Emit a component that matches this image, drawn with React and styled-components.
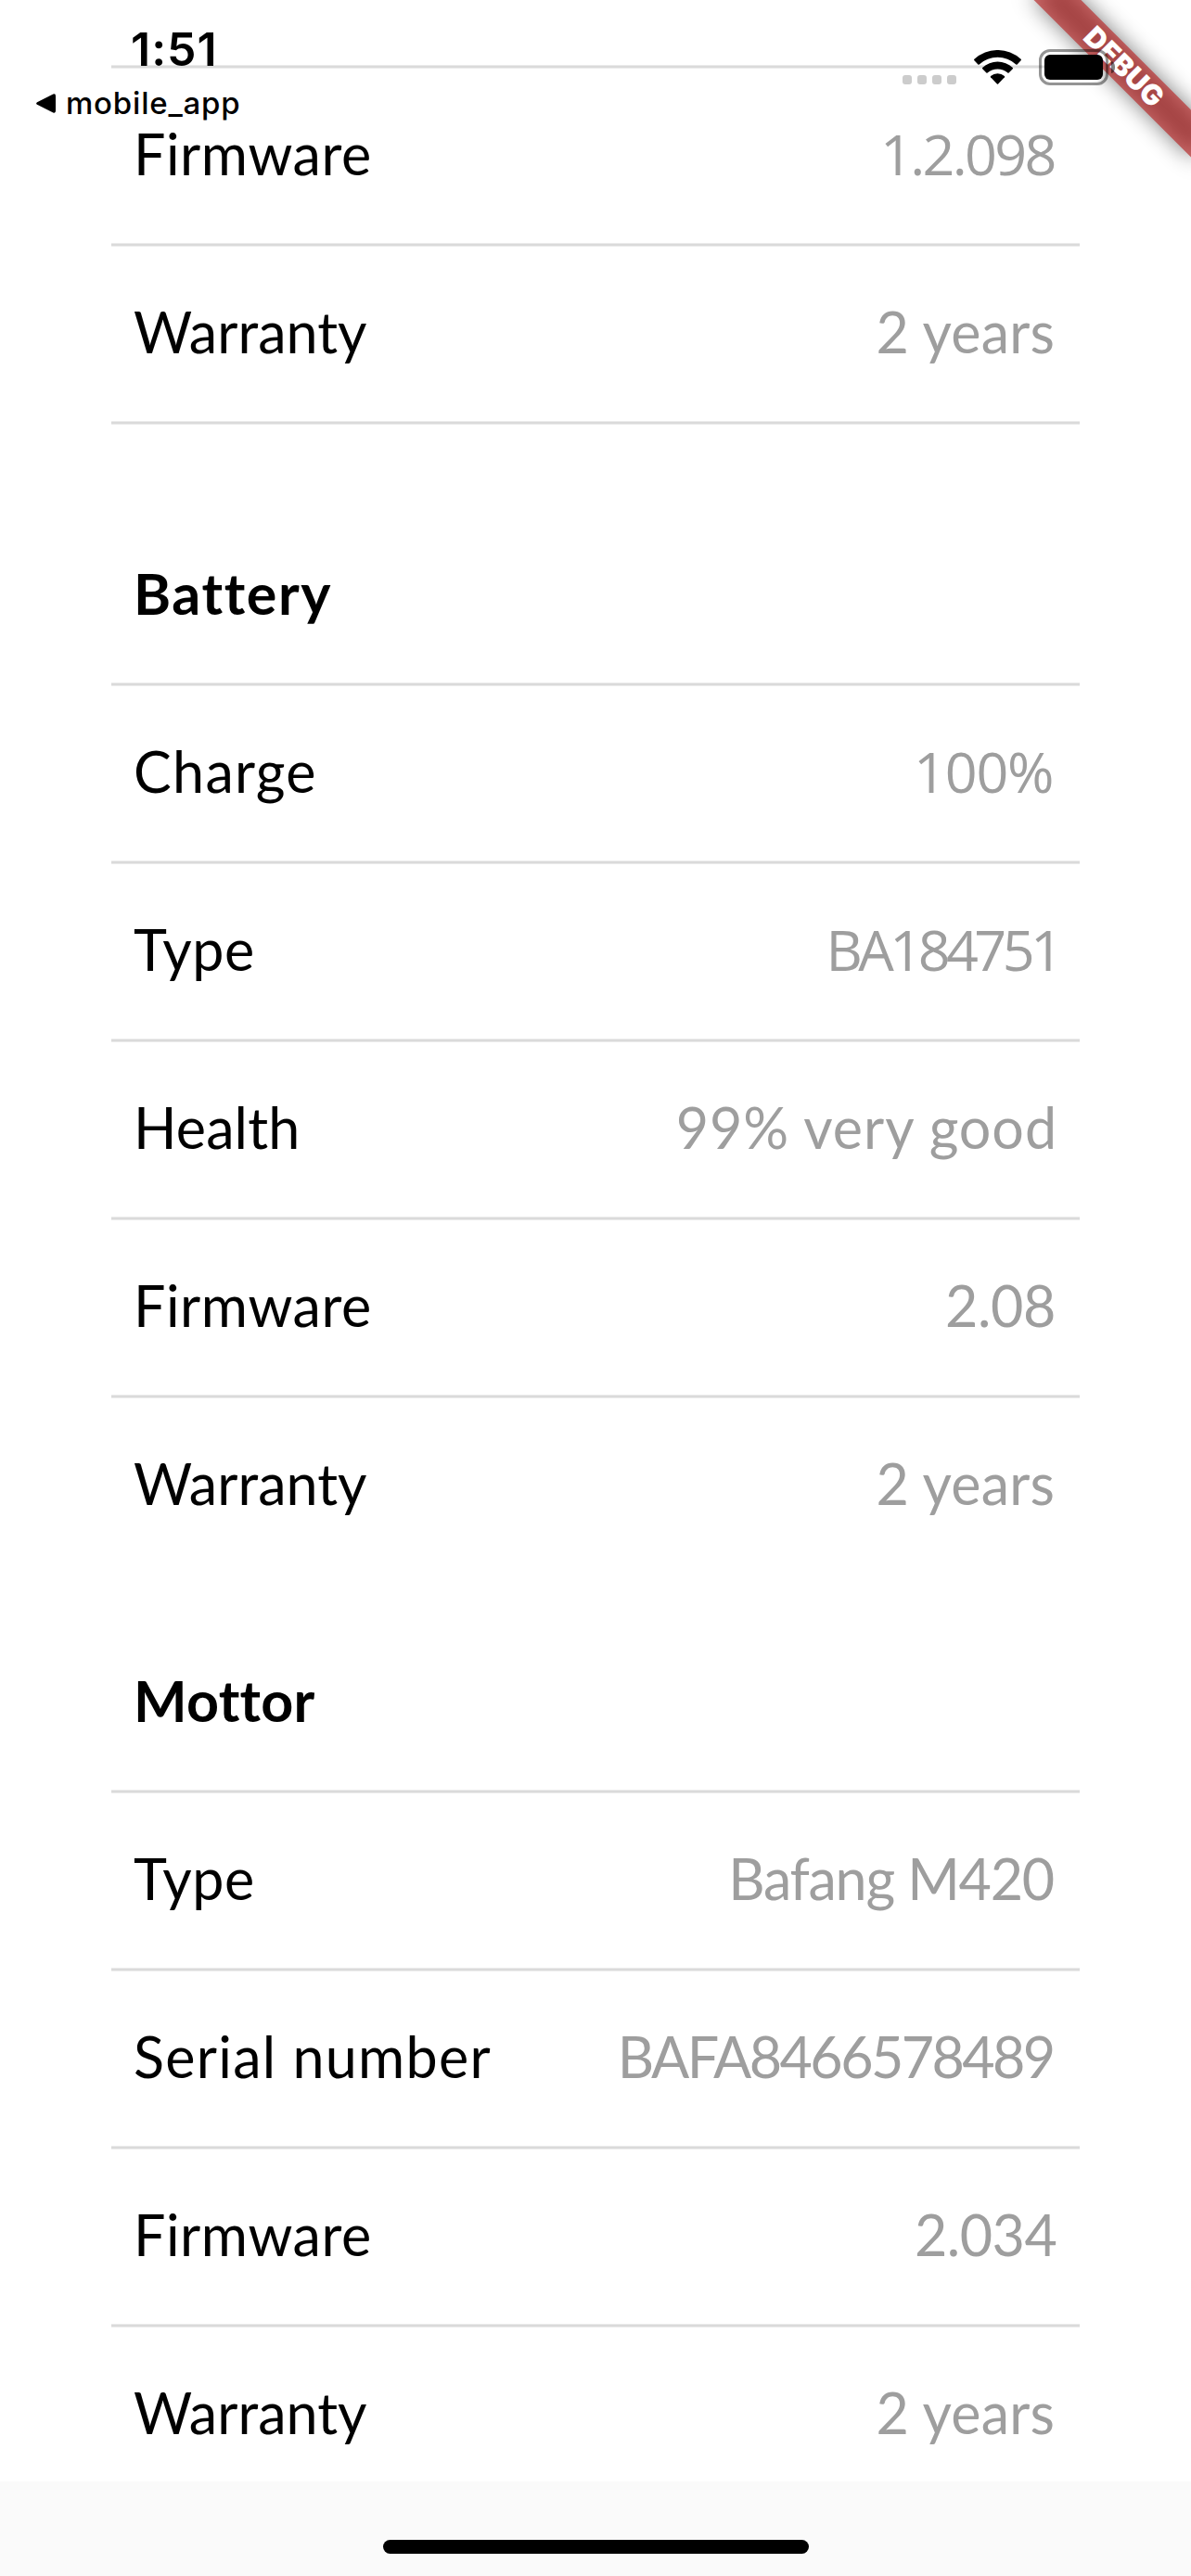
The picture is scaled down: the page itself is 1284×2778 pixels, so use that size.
import React from "react";
import styled, { createGlobalStyle } from "styled-components";

const GlobalStyle = createGlobalStyle`
  *, *::before, *::after { box-sizing: border-box; }
  body { margin: 0; background: #fafafa; }
`;

const Screen = styled.main`
  position: relative;
  display: flex;
  flex-direction: column;
  width: 1284px;
  height: 2778px;
  overflow: hidden;
  background: #fafafa;
  color: #000;
  font-family: Lato, "Open Sans", sans-serif;
`;

const Content = styled.div`
  height: 2676px;
  overflow: hidden;
  padding: 70px 120px 0;
  background: #fff;
`;

const Section = styled.section`
  margin-top: ${(p) => p.$gap || 0}px;
`;

const Row = styled.div`
  display: flex;
  align-items: center;
  justify-content: space-between;
  height: 188px;
  padding: 0 24px 5px;
  font-size: 61px;
  line-height: 72px;
  white-space: nowrap;
`;

const Divider = styled.div`
  height: 4px;
  background: #dadada;
  border: solid #ebebeb;
  border-width: 1px 0;
`;

const Title = styled.h2`
  margin: 0;
  font-size: inherit;
  font-weight: 700;
  letter-spacing: ${(p) => p.$track}px;
`;

const Label = styled.span`
  letter-spacing: ${(p) => p.$track}px;
`;

const Value = styled.span`
  color: #9e9e9e;
  font-family: ${(p) => (p.$plainOne ? '"Open Sans", sans-serif' : "inherit")};
  letter-spacing: ${(p) => p.$track}px;
  margin-right: ${(p) => p.$end}px;
`;

const BottomBar = styled.footer`
  display: flex;
  justify-content: center;
  height: 102px;
  padding-top: 63px;
  background: #fafafa;
`;

const HomeIndicator = styled.div`
  width: 459px;
  height: 15px;
  border-radius: 8px;
  background: #000;
`;

const StatusBar = styled.header`
  position: absolute;
  inset: 0 0 auto 0;
  display: flex;
  justify-content: space-between;
  height: 140px;
  padding: 23px 82px 0 39px;
  font-family: Inter, sans-serif;
`;

const StatusLeft = styled.div`
  display: flex;
  flex-direction: column;
  gap: 8px;
`;

const Time = styled.span`
  margin-left: 102px;
  font-size: 50px;
  line-height: 60px;
  font-weight: 600;
  letter-spacing: 1px;
`;

const BackLink = styled.span`
  display: flex;
  align-items: center;
  gap: 11px;
  font-size: 33px;
  line-height: 40px;
  font-weight: 500;
  letter-spacing: 0.8px;
`;

const StatusRight = styled.div`
  display: flex;
  align-items: flex-start;
  padding-top: 30px;
`;

const Signal = styled.div`
  display: flex;
  gap: 6px;
  margin: 28px 19px 0 0;
`;

const Dot = styled.i`
  width: 10px;
  height: 10px;
  border-radius: 3px;
  background: #cccccc;
`;

const WifiIcon = styled.svg`
  width: 51px;
  height: 37px;
  margin: 1px 19px 0 0;
`;

const Battery = styled.div`
  display: flex;
  align-items: center;
`;

const BatteryShell = styled.div`
  width: 75px;
  height: 39px;
  padding: 3px;
  border: 3px solid rgba(0, 0, 0, 0.42);
  border-radius: 12px;
`;

const BatteryFill = styled.div`
  width: 63px;
  height: 27px;
  border-radius: 6px;
  background: #000;
`;

const BatteryCap = styled.div`
  width: 4px;
  height: 13px;
  margin-left: 3px;
  border-radius: 0 4px 4px 0 / 0 6px 6px 0;
  background: rgba(0, 0, 0, 0.5);
`;

const BannerCorner = styled.div`
  position: absolute;
  top: 0;
  right: 0;
  width: 260px;
  height: 260px;
  overflow: hidden;
`;

const Ribbon = styled.div`
  position: absolute;
  top: 54px;
  right: -48px;
  width: 240px;
  height: 36px;
  transform: rotate(45deg);
`;

const RibbonShadow = styled.div`
  position: absolute;
  inset: 0;
  background: rgba(0, 0, 0, 0.5);
  filter: blur(11.5px);
`;

const RibbonLabel = styled.div`
  position: absolute;
  inset: 0;
  background: rgba(183, 28, 28, 0.627);
  color: #fff;
  font-family: Inter, sans-serif;
  font-size: 30.6px;
  line-height: 35px;
  font-weight: 900;
  letter-spacing: 0.2px;
  text-align: center;
`;

const sections = [
  {
    rows: [
      { label: "Firmware", track: 0.55, value: "1.2.098", vTrack: -2.7, end: 3.4, plainOne: true },
      { label: "Warranty", track: 0.05, value: "2 years", vTrack: 0.2, end: 3 },
    ],
    closed: true,
  },
  {
    gap: 90,
    title: "Battery",
    titleTrack: 1.6,
    rows: [
      { label: "Charge", track: 1.3, value: "100%", vTrack: -1.2, end: 4.7, plainOne: true },
      { label: "Type", track: 0.5, value: "BA184751", vTrack: -4.55, end: -1.3, plainOne: true },
      { label: "Health", track: 0.15, value: "99% very good", vTrack: 0.95, end: 0 },
      { label: "Firmware", track: 0.55, value: "2.08", vTrack: -0.4, end: 2 },
      { label: "Warranty", track: 0.05, value: "2 years", vTrack: 0.2, end: 3 },
    ],
  },
  {
    gap: 46,
    title: "Mottor",
    titleTrack: 0.25,
    rows: [
      { label: "Type", track: 0.5, value: "Bafang M420", vTrack: -1.25, end: 4 },
      { label: "Serial number", track: 1.3, value: "BAFA8466578489", vTrack: -2.6, end: 4.4 },
      { label: "Firmware", track: 0.55, value: "2.034", vTrack: -0.5, end: 0.7 },
      { label: "Warranty", track: 0.05, value: "2 years", vTrack: 0.2, end: 3 },
    ],
  },
];

function DetailSection({ gap, title, titleTrack, rows, closed }) {
  return (
    <Section $gap={gap}>
      {title && (
        <Row>
          <Title $track={titleTrack}>{title}</Title>
        </Row>
      )}
      {rows.map((row) => (
        <React.Fragment key={row.label}>
          <Divider />
          <Row>
            <Label $track={row.track}>{row.label}</Label>
            <Value $track={row.vTrack} $end={row.end} $plainOne={row.plainOne}>
              {row.value}
            </Value>
          </Row>
        </React.Fragment>
      ))}
      {closed && <Divider />}
    </Section>
  );
}

function DebugBanner() {
  return (
    <BannerCorner>
      <Ribbon>
        <RibbonShadow />
        <RibbonLabel>DEBUG</RibbonLabel>
      </Ribbon>
    </BannerCorner>
  );
}

function Status() {
  return (
    <StatusBar>
      <StatusLeft>
        <Time>1:51</Time>
        <BackLink>
          <svg width="21" height="21" viewBox="0 0 21 21">
            <path d="M1 9.2 18.3.6Q21 -.4 21 2.4V18.6Q21 21.4 18.3 20.4L1 11.8Q-.8 10.5 1 9.2Z" />
          </svg>
          mobile_app
        </BackLink>
      </StatusLeft>
      <StatusRight>
        <Signal>
          <Dot />
          <Dot />
          <Dot />
          <Dot />
        </Signal>
        <WifiIcon viewBox="0 0 51 37">
          <path d="M.4 11.2Q-.3 10.5.4 9.8A37 37 0 0 1 50.6 9.8Q51.3 10.5 50.6 11.2L46.6 15.4Q46 16 45.3 15.4A29.5 29.5 0 0 0 5.7 15.4Q5 16 4.4 15.4Z" />
          <path d="M9.2 20.2Q8.6 19.5 9.2 18.9A24.3 24.3 0 0 1 41.8 18.9Q42.4 19.5 41.8 20.2L37.6 24.5Q37 25 36.4 24.5A16.8 16.8 0 0 0 14.6 24.5Q14 25 13.4 24.5Z" />
          <path d="M18 29.2Q17.5 28.6 18.1 28A11.6 11.6 0 0 1 32.9 28Q33.5 28.6 33 29.2L26.1 36.4Q25.5 37 24.9 36.4Z" />
        </WifiIcon>
        <Battery>
          <BatteryShell>
            <BatteryFill />
          </BatteryShell>
          <BatteryCap />
        </Battery>
      </StatusRight>
    </StatusBar>
  );
}

export default function App() {
  return (
    <>
      <GlobalStyle />
      <Screen>
        <Content>
          {sections.map((section, i) => (
            <DetailSection key={i} {...section} />
          ))}
        </Content>
        <BottomBar>
          <HomeIndicator />
        </BottomBar>
        <DebugBanner />
        <Status />
      </Screen>
    </>
  );
}
